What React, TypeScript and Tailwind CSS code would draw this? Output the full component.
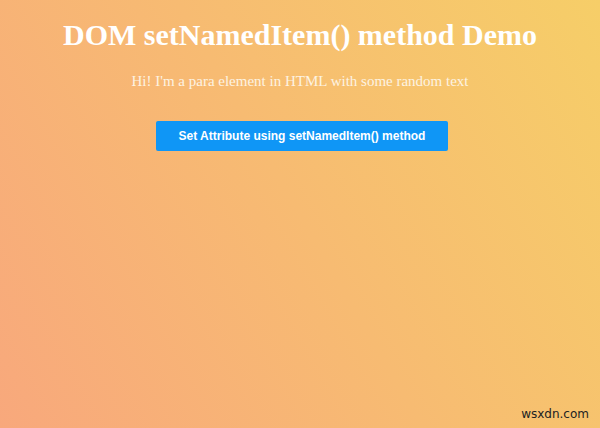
export default function App() {
  return (
    <div className="relative h-[428px] w-[600px] overflow-hidden bg-[linear-gradient(60deg,#f8a87c_0%,#f6ce68_100%)] text-center">
      <h1 className="pt-[17px] text-[30px] font-bold leading-[36px] text-white [font-family:'Liberation_Serif',serif]">
        DOM setNamedItem() method Demo
      </h1>
      <p className="mt-[19px] text-[15px] leading-[18px] text-[#fdf3e2] [font-family:'Liberation_Serif',serif]">
        Hi! I'm a para element in HTML with some random text
      </p>
      <div className="mt-[31px] flex justify-center">
        <button className="ml-[4px] h-[30px] w-[292px] rounded-[2px] bg-[#0f96f6] text-[12px] font-bold text-white [font-family:'Liberation_Sans',sans-serif]">
          Set Attribute using setNamedItem() method
        </button>
      </div>
      <div className="absolute bottom-[5px] right-[11px] text-[12px] text-[#222] [font-family:'DejaVu_Sans',sans-serif]">
        wsxdn.com
      </div>
    </div>
  );
}
